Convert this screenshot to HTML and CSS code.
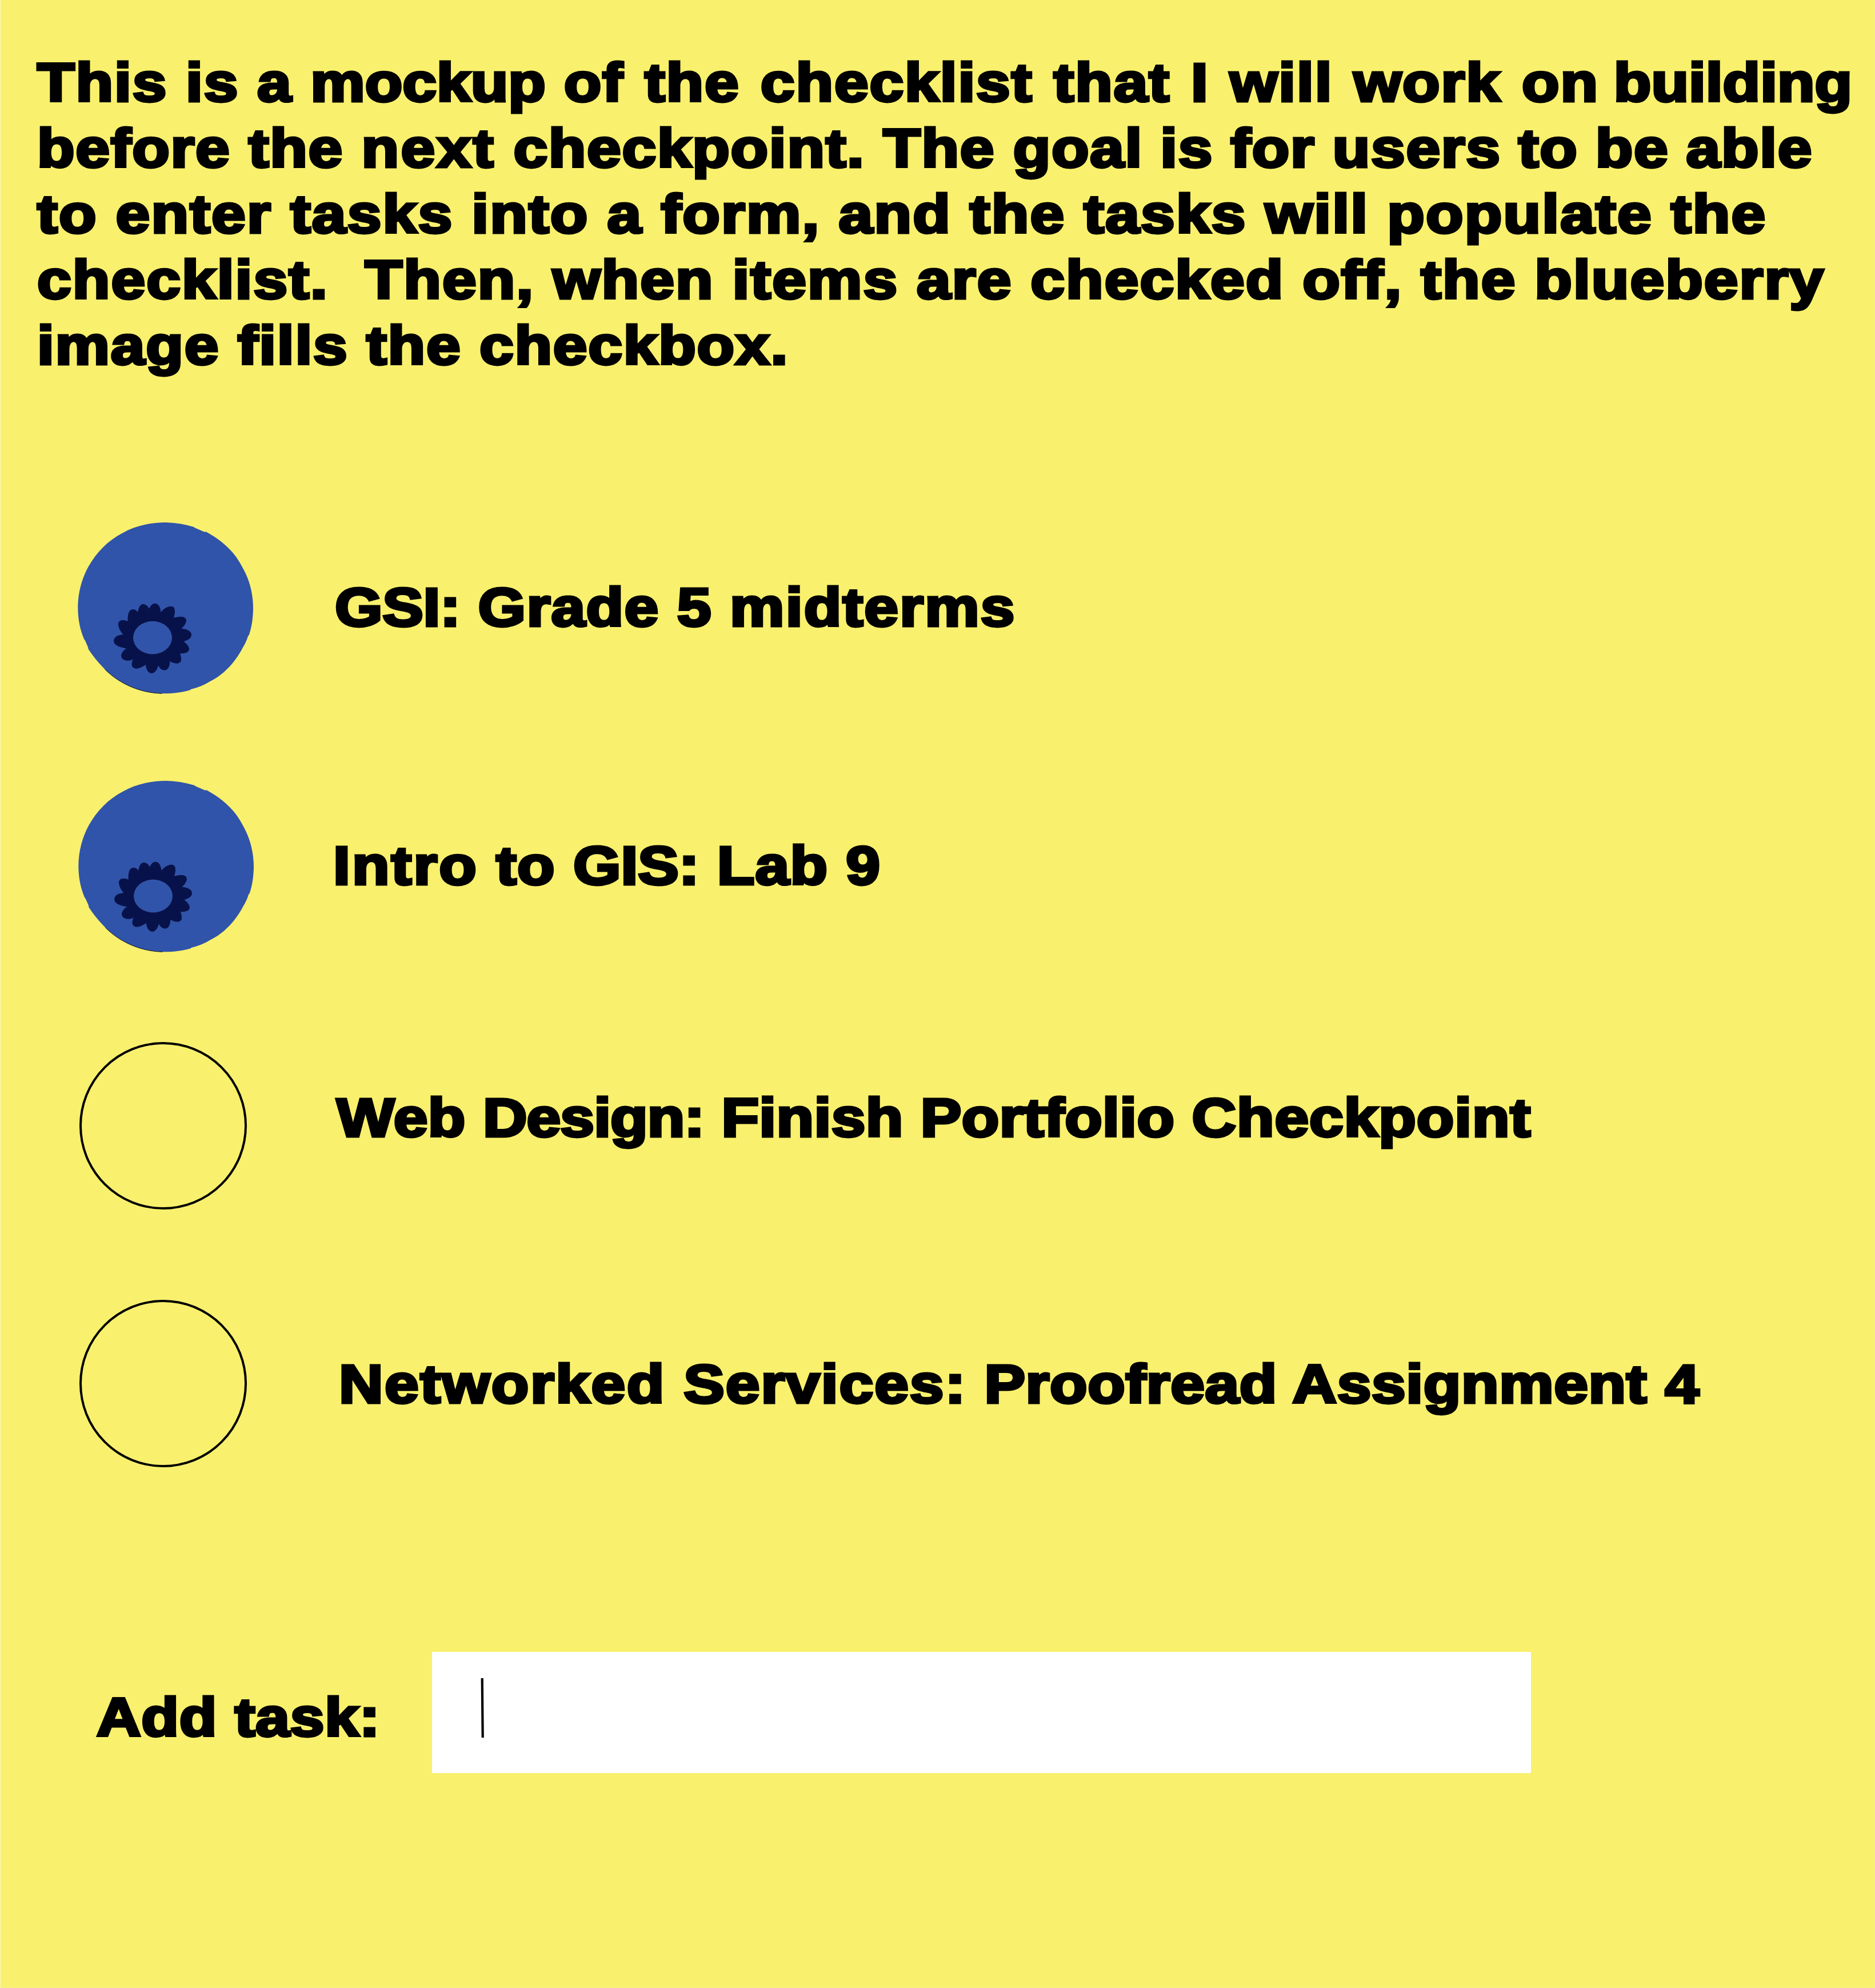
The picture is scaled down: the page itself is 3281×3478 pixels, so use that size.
FILE: index.html
```html
<!DOCTYPE html>
<html lang="en">
<head>
<meta charset="utf-8">
<title>Checklist</title>
<link rel="stylesheet" href="styles.css">
</head>
<body>
<svg class="defs" aria-hidden="true">
  <symbol id="blueberry" viewBox="0 0 1020 990">
    <path fill="#3054a9" d="M49 490C49 410 70 335 105 272C148 197 206 138 282 98C350 60 430 42 510 42C560 43 610 51 658 66L662 70L714 92L721 91C782 123 836 166 876 218C895 245 905 262 918 287C952 350 969 420 969 495C968 545 962 590 947 634L943 636C935 662 925 682 914 700C893 740 870 772 846 798L815 828C793 847 768 864 742 877C710 896 678 910 641 918L638 922C590 935 545 941 490 940C400 937 325 910 262 870C198 828 148 772 104 707L102 697L86 660L82 656C60 605 49 550 49 490Z"/>
    <path fill="none" stroke="#0a0f2a" stroke-width="3" d="M490 940C400 937 325 910 262 870C235 853 212 834 190 812"/>
    <g transform="translate(180 390)">
      <path fill="#08124a" d="M243 105C250 88 260 77 273 77C292 77 303 98 304 123C318 106 338 92 358 92C384 93 380 126 372 152C390 147 405 146 415 147C449 152 442 182 413 209C445 211 465 224 465 241C465 260 448 270 424 277C440 289 453 303 453 318C450 337 430 339 405 340C411 356 413 372 409 382C399 398 374 393 352 381C352 405 342 428 325 428C309 428 298 418 291 403C284 428 272 444 255 444C238 442 228 425 224 399C207 411 190 419 175 419C152 418 145 398 158 371C145 376 135 377 125 377C106 374 96 364 96 350C98 336 108 324 123 313C85 309 57 294 57 274C58 254 78 242 107 241C90 222 80 200 81 183C84 163 107 162 131 170C129 132 138 108 157 108C168 108 177 113 183 123C188 98 197 81 211 81C226 81 237 91 243 105Z"/>
      <ellipse cx="261" cy="257" rx="102" ry="86.500" fill="#3054a9"/>
    </g>
  </symbol>
</svg>
<main class="page">
  <p class="intro">
    <span class="line line-1">This is a <span class="tight">mockup</span> <span class="airy">of the checklist that I will work on </span><span class="tight">building</span></span>
    <span class="line line-2">before the <span class="wide">next</span> checkpoint. The <span class="close">goal is for users to be able</span></span>
    <span class="line line-3">to enter tasks into a form, and the tasks will populate the</span>
    <span class="line line-4">checklist.&nbsp; Then, when items are checked off, the blueberry</span>
    <span class="line line-5">image fills the checkbox.</span>
  </p>
  <ul class="tasks">
    <li class="task task-grade">
      <span class="check"><svg class="berry"><use href="#blueberry"/></svg></span>
      <span class="label"><span class="course">GSI:</span> Grade 5 <span class="last">midterms</span></span>
    </li>
    <li class="task task-lab">
      <span class="check"><svg class="berry"><use href="#blueberry"/></svg></span>
      <span class="label"><span class="course">Intro</span> to <span class="topic">GIS:</span> Lab 9</span>
    </li>
    <li class="task task-portfolio">
      <span class="check"><span class="ring"></span></span>
      <span class="label">Web <span class="topic">Design:</span> Finish Portfolio <span class="last">Checkpoint</span></span>
    </li>
    <li class="task task-proofread">
      <span class="check"><span class="ring"></span></span>
      <span class="label"><span class="course">Networked</span> <span class="topic">Services:</span> <span class="last">Proofread Assignment</span> 4</span>
    </li>
  </ul>
  <div class="add">
    <span class="label add-label">Add task:</span>
    <div class="field"><svg class="caret" viewBox="0 0 6 104"><path d="M2.700 0L3.700 104" stroke="#000" stroke-width="4.200"/></svg></div>
  </div>
</main>
</body>
</html>
```
FILE: styles.css
```css
* { box-sizing: border-box; }

body {
  margin: 0;
  background: #f9f06d;
  color: #000;
  font: bold 94px/115.2px "Liberation Sans", Arial, sans-serif;
}

.defs { display: none; }

.page {
  width: 3281px;
  height: 3478px;
  overflow: hidden;
  border: 1px solid #faf28a;
  border-top: 0;
  border-left-color: #fcf8c4;
}

/* Heavy, slightly extended lettering */
.line,
.label {
  display: block;
  width: max-content;
  white-space: pre;
  -webkit-text-stroke: 4.8px #000;
  transform: scaleX(1.142);
  transform-origin: 0 0;
}

.intro {
  height: 842px;
  margin: 0;
  padding: 86.5px 0 0 64px;
}
.line-1 { letter-spacing: 1.66px; }
.line-2 { letter-spacing: 1.49px; }
.line-3 { letter-spacing: 1.89px; }
.line-4 { letter-spacing: 1.8px; }
.line-5 { letter-spacing: 1.55px; }
.tight { letter-spacing: 0; }
.wide { letter-spacing: 3px; }
.airy { word-spacing: 3.9px; }
.airy + .tight { margin-left: -9px; }
.close { word-spacing: -1.2px; }

.tasks {
  margin: 0;
  padding: 0;
  list-style: none;
}
.task {
  display: flex;
  align-items: flex-start;
  height: 451px;
}
.check {
  flex: none;
  width: 581px;
  padding: 58px 0 0 119px;
}
.berry {
  display: block;
  width: 340px;
  height: 330px;
}
.ring {
  display: block;
  width: 293px;
  height: 293px;
  margin: 21px 0 0 19px;
  border: 4px solid #000;
  border-radius: 50%;
}

.task-grade .label { margin: 162.5px 0 0 4px; letter-spacing: 1.2px; }
.task-grade .course { letter-spacing: -0.3px; }
.task-grade .last { letter-spacing: 1.9px; }

.task-lab .check { padding: 59px 0 0 120px; }
.task-lab .label { margin: 164px 0 0 1px; letter-spacing: 1.1px; }
.task-lab .course { letter-spacing: 2.7px; }
.task-lab .topic { letter-spacing: 0; }

.task-portfolio .label { margin: 153.5px 0 0 6.5px; letter-spacing: 0.32px; }
.task-portfolio .topic { letter-spacing: -0.8px; }
.task-portfolio .last { letter-spacing: 0.8px; }

.task-proofread .label { margin: 168.5px 0 0 11px; letter-spacing: 1.25px; }
.task-proofread .course { letter-spacing: 2.25px; }
.task-proofread .topic { letter-spacing: 1.7px; }
.task-proofread .last { letter-spacing: 0.55px; }

.add {
  display: flex;
  align-items: flex-start;
  padding: 244px 0 0 168px;
}
.add-label {
  flex: none;
  width: 587px;
  margin-top: 56.5px;
  letter-spacing: 0.7px;
}
.field {
  width: 1923px;
  height: 211.5px;
  padding: 46px 0 0 85px;
  background: #fff;
}
.caret {
  display: block;
  width: 6px;
  height: 104px;
}
```
